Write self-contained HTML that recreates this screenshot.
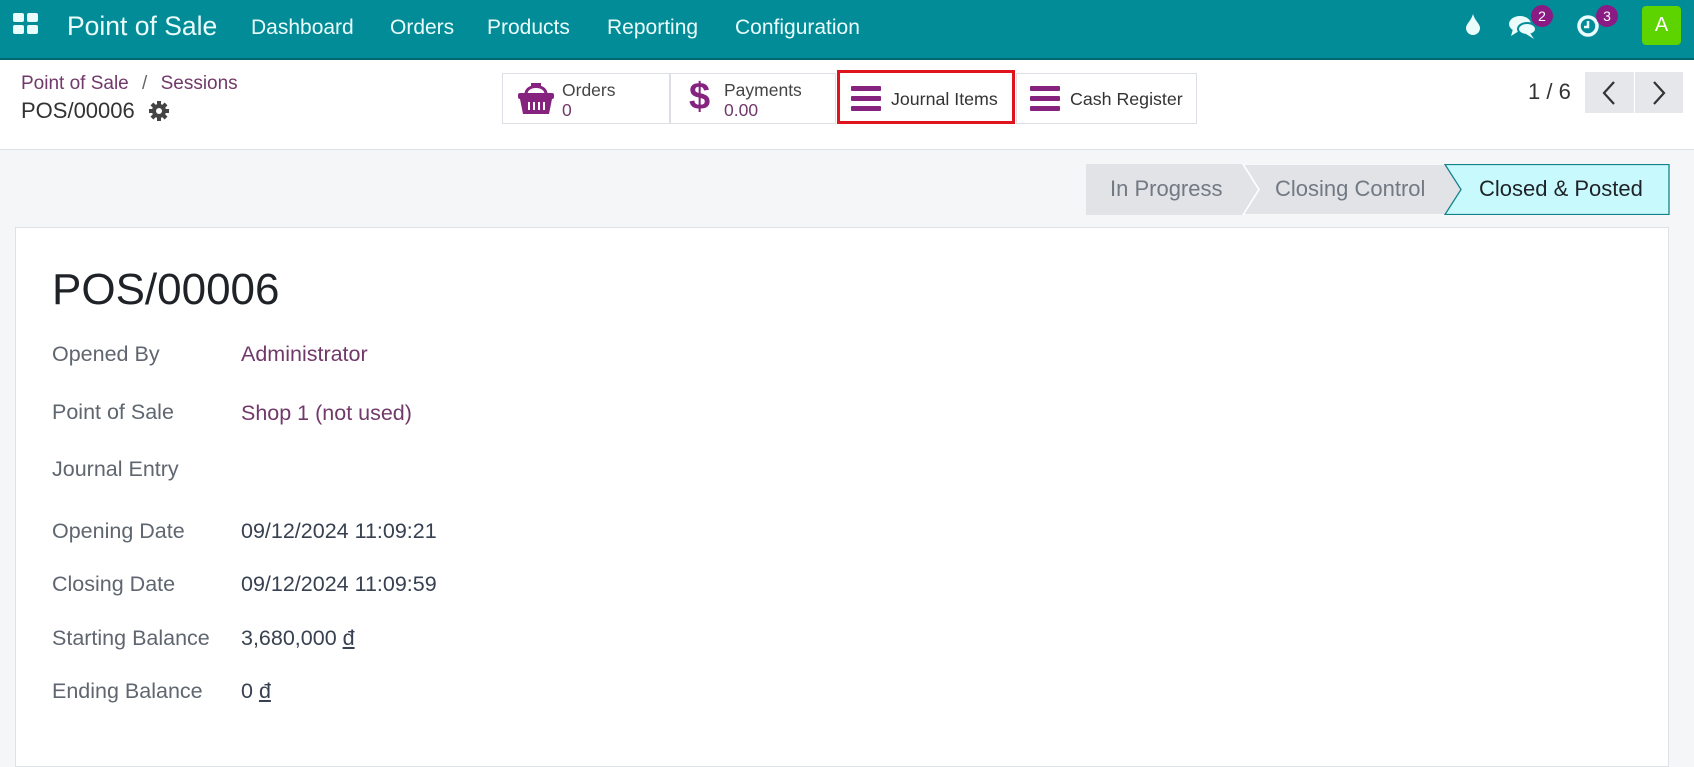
<!DOCTYPE html>
<html><head><meta charset="utf-8"><style>
*{box-sizing:border-box;margin:0;padding:0}
body{width:1694px;height:752px;overflow:hidden;font-family:"Liberation Sans",Roboto,sans-serif;background:#f5f6f8;position:relative;color:#374151}
.abs{position:absolute;white-space:nowrap}
.nav{position:absolute;left:0;top:0;width:1694px;height:60px;background:#028c98;border-bottom:2px solid #016770}
.nav .m{color:#eafcfc;font-size:21px;top:16px}
.cp{position:absolute;left:0;top:60px;width:1694px;height:90px;background:#fff;border-bottom:1px solid #dde1e5}
.purple{color:#71396a}
.bb{position:absolute;top:73px;height:51px;background:#fff;border:1px solid #dcdfe3}
.lbl{color:#5f6670;font-size:21.5px;left:52px}
.val{font-size:21.5px;left:241px;color:#374151}
.badge{position:absolute;width:22px;height:22px;border-radius:11px;background:#8a1a84;color:#fff;font-size:14px;text-align:center;line-height:22px}
.hb{position:absolute;left:0;width:30px;height:5px;background:#85237f;border-radius:1px}
</style></head><body>
<div class="nav">
  <svg class="abs" style="left:13px;top:13px" width="26" height="22" viewBox="0 0 26 22"><rect x="0" y="0" width="11" height="9" rx="2" fill="#eafcfc"/><rect x="14" y="0" width="11" height="9" rx="2" fill="#eafcfc"/><rect x="0" y="12" width="11" height="9" rx="2" fill="#eafcfc"/><rect x="14" y="12" width="11" height="9" rx="2" fill="#eafcfc"/></svg>
  <div class="abs" style="left:67px;top:11px;font-size:26.5px;color:#eafcfc">Point of Sale</div>
  <div class="abs m" style="left:251px">Dashboard</div>
  <div class="abs m" style="left:390px">Orders</div>
  <div class="abs m" style="left:487px">Products</div>
  <div class="abs m" style="left:607px">Reporting</div>
  <div class="abs m" style="left:735px">Configuration</div>
  <svg class="abs" style="left:1465px;top:14px" width="16" height="22" viewBox="0 0 16 22"><path d="M8 0 C6 7 1 10 1 14 A7 7 0 0 0 15 14 C15 10 10 7 8 0Z" fill="#eafcfc"/></svg>
  <svg class="abs" style="left:1508px;top:14px" width="30" height="26" viewBox="0 0 30 26"><ellipse cx="12" cy="10" rx="11" ry="8" fill="#eafcfc"/><path d="M5 15 L3 22 L11 17Z" fill="#eafcfc"/><ellipse cx="19" cy="15" rx="9" ry="6" fill="#eafcfc" stroke="#028c98" stroke-width="2"/><path d="M22 19 L26 25 L18 20Z" fill="#eafcfc"/></svg>
  <div class="badge" style="left:1531px;top:5px">2</div>
  <svg class="abs" style="left:1576px;top:13px" width="26" height="26" viewBox="0 0 26 26"><circle cx="12" cy="13" r="9" fill="none" stroke="#eafcfc" stroke-width="3.5"/><path d="M12 8 V14 H8" stroke="#eafcfc" stroke-width="2.5" fill="none"/></svg>
  <div class="badge" style="left:1596px;top:5px">3</div>
  <div class="abs" style="left:1642px;top:6px;width:39px;height:39px;background:#5dd300;border-radius:4px;color:#fff;font-size:20px;text-align:center;line-height:39px">A</div>
</div>
<div class="cp"></div>
<div class="abs purple" style="left:21px;top:73px;font-size:19px">Point of Sale <span style="color:#666;margin:0 8px">/</span> Sessions</div>
<div class="abs" style="left:21px;top:98px;font-size:22px;color:#333">POS/00006</div>
<svg class="abs" style="left:149px;top:101px" width="20" height="20" viewBox="0 0 20 20"><g fill="#444"><circle cx="10" cy="10" r="7"/><rect x="8" y="0" width="4" height="20"/><rect x="0" y="8" width="20" height="4"/><rect x="8" y="0" width="4" height="20" transform="rotate(45 10 10)"/><rect x="8" y="0" width="4" height="20" transform="rotate(-45 10 10)"/></g><circle cx="10" cy="10" r="3" fill="#fff"/></svg>

<div class="bb" style="left:502px;width:168px"></div>
<div class="bb" style="left:670px;width:166px"></div>
<div class="bb" style="left:1016px;width:181px"></div>
<div class="abs" style="left:837px;top:70px;width:178px;height:54px;border:3px solid #e0141c;background:#fff"></div>
<svg class="abs" style="left:517px;top:80px" width="38" height="36" viewBox="0 0 38 36"><path d="M9 14 C9 4 29 4 29 14" fill="none" stroke="#85237f" stroke-width="3"/><rect x="14" y="3" width="10" height="4" fill="#85237f"/><rect x="1" y="13" width="36" height="6" rx="2" fill="#85237f"/><path d="M3 19 H35 L32 34 H6Z" fill="#85237f"/><g stroke="#fff" stroke-width="2"><line x1="12" y1="22" x2="12" y2="30"/><line x1="17" y1="22" x2="17" y2="30"/><line x1="22" y1="22" x2="22" y2="30"/><line x1="27" y1="22" x2="27" y2="30"/></g></svg>
<div class="abs" style="left:562px;top:80px;font-size:17.5px;color:#444">Orders</div>
<div class="abs purple" style="left:562px;top:100px;font-size:17.5px">0</div>
<div class="abs" style="left:689px;top:76px;font-size:38px;font-weight:bold;color:#85237f">$</div>
<div class="abs" style="left:724px;top:80px;font-size:17.5px;color:#444">Payments</div>
<div class="abs purple" style="left:724px;top:100px;font-size:17.5px">0.00</div>
<div class="abs" style="left:851px;top:86px;width:30px;height:26px"><div class="hb" style="top:0"></div><div class="hb" style="top:10px"></div><div class="hb" style="top:20px"></div></div>
<div class="abs" style="left:891px;top:89px;font-size:17.8px;color:#333">Journal Items</div>
<div class="abs" style="left:1030px;top:86px;width:30px;height:26px"><div class="hb" style="top:0"></div><div class="hb" style="top:10px"></div><div class="hb" style="top:20px"></div></div>
<div class="abs" style="left:1070px;top:89px;font-size:17.8px;color:#333">Cash Register</div>

<div class="abs" style="left:1528px;top:79px;font-size:22px;color:#333">1 / 6</div>
<div class="abs" style="left:1585px;top:72px;width:98px;height:41px;background:#e5e7ea"></div>
<div class="abs" style="left:1634px;top:72px;width:1px;height:41px;background:#fff"></div>
<svg class="abs" style="left:1601px;top:80px" width="16" height="26" viewBox="0 0 16 26"><path d="M13 2 L3 13 L13 24" fill="none" stroke="#333" stroke-width="2.2"/></svg>
<svg class="abs" style="left:1651px;top:80px" width="16" height="26" viewBox="0 0 16 26"><path d="M3 2 L13 13 L3 24" fill="none" stroke="#333" stroke-width="2.2"/></svg>

<svg class="abs" style="left:1086px;top:164px" width="584" height="51" viewBox="0 0 584 51">
<path d="M0 0 H156 L172 25.5 L156 51 H0Z" fill="#e1e3e7"/>
<path d="M157 0 H359 L375 25.5 L359 51 H157 L173 25.5Z" fill="#e1e3e7" stroke="#fff" stroke-width="1.5"/>
<path d="M359 0.5 H583 V50.5 H359 L375 25.5Z" fill="#c8fafd" stroke="#15818b" stroke-width="1.3"/>
</svg>
<div class="abs" style="left:1110px;top:176px;font-size:22px;color:#727983">In Progress</div>
<div class="abs" style="left:1275px;top:176px;font-size:22px;color:#727983">Closing Control</div>
<div class="abs" style="left:1479px;top:176px;font-size:22px;color:#1f2328">Closed &amp; Posted</div>

<div class="abs" style="left:15px;top:227px;width:1654px;height:540px;background:#fff;border:1px solid #dee2e6"></div>
<div class="abs" style="left:52px;top:265px;font-size:44px;color:#1f2328">POS/00006</div>
<div class="abs lbl" style="top:342px">Opened By</div><div class="abs val" style="top:342px;color:#71396a">Administrator</div>
<div class="abs lbl" style="top:400px">Point of Sale</div><div class="abs val" style="top:401px;color:#71396a">Shop 1 (not used)</div>
<div class="abs lbl" style="top:457px">Journal Entry</div>
<div class="abs lbl" style="top:519px">Opening Date</div><div class="abs val" style="top:519px">09/12/2024 11:09:21</div>
<div class="abs lbl" style="top:572px">Closing Date</div><div class="abs val" style="top:572px">09/12/2024 11:09:59</div>
<div class="abs lbl" style="top:626px">Starting Balance</div><div class="abs val" style="top:626px">3,680,000 <u>đ</u></div>
<div class="abs lbl" style="top:679px">Ending Balance</div><div class="abs val" style="top:679px">0 <u>đ</u></div>
</body></html>
